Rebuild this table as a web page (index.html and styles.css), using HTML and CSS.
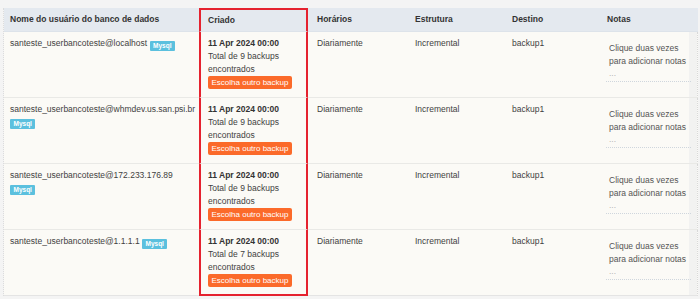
FILE: index.html
```html
<!DOCTYPE html>
<html lang="pt">
<head>
<meta charset="utf-8">
<link rel="stylesheet" href="styles.css">
</head>
<body>
<div class="wrap">
<table class="grid">
<thead>
<tr>
<th class="c-name">Nome do usuário do banco de dados</th>
<th class="c-created">Criado</th>
<th class="c-sched">Horários</th>
<th class="c-struct">Estrutura</th>
<th class="c-dest">Destino</th>
<th class="c-notes">Notas</th>
</tr>
</thead>
<tbody>
<tr>
<td class="c-name"><span class="host">santeste_userbancoteste@localhost</span> <span class="badge">Mysql</span></td>
<td class="c-created"><div class="date">11 Apr 2024 00:00</div><div>Total de 9 backups encontrados</div><span class="btn">Escolha outro backup</span></td>
<td class="c-sched">Diariamente</td>
<td class="c-struct">Incremental</td>
<td class="c-dest">backup1</td>
<td class="c-notes"><div class="note">Clique duas vezes para adicionar notas<div class="dots">...</div></div></td>
</tr>
<tr>
<td class="c-name"><span class="host">santeste_userbancoteste@whmdev.us.san.psi.br</span> <span class="badge">Mysql</span></td>
<td class="c-created"><div class="date">11 Apr 2024 00:00</div><div>Total de 9 backups encontrados</div><span class="btn">Escolha outro backup</span></td>
<td class="c-sched">Diariamente</td>
<td class="c-struct">Incremental</td>
<td class="c-dest">backup1</td>
<td class="c-notes"><div class="note">Clique duas vezes para adicionar notas<div class="dots">...</div></div></td>
</tr>
<tr>
<td class="c-name"><span class="host">santeste_userbancoteste@172.233.176.89</span> <span class="badge">Mysql</span></td>
<td class="c-created"><div class="date">11 Apr 2024 00:00</div><div>Total de 9 backups encontrados</div><span class="btn">Escolha outro backup</span></td>
<td class="c-sched">Diariamente</td>
<td class="c-struct">Incremental</td>
<td class="c-dest">backup1</td>
<td class="c-notes"><div class="note">Clique duas vezes para adicionar notas<div class="dots">...</div></div></td>
</tr>
<tr class="last">
<td class="c-name"><span class="host">santeste_userbancoteste@1.1.1.1</span> <span class="badge">Mysql</span></td>
<td class="c-created"><div class="date">11 Apr 2024 00:00</div><div>Total de 7 backups encontrados</div><span class="btn">Escolha outro backup</span></td>
<td class="c-sched">Diariamente</td>
<td class="c-struct">Incremental</td>
<td class="c-dest">backup1</td>
<td class="c-notes"><div class="note">Clique duas vezes para adicionar notas<div class="dots">...</div></div></td>
</tr>
</tbody>
</table>
</div>
</body>
</html>
```
FILE: styles.css
```css
html, body {
  margin: 0;
  padding: 0;
  background: #f4f4f4;
}
body {
  font-family: "Liberation Sans", Arial, sans-serif;
  font-size: 8.5px;
  line-height: 12.8px;
  color: #3f3f3f;
}
.wrap {
  padding: 8px 0 0 3px;
  border-top: 1px dotted #e2e2e2;
  margin-top: -1px;
}
.grid {
  width: 694px;
  table-layout: fixed;
  border-collapse: separate;
  border-spacing: 0;
  border-left: 1px dotted #dcdcdc;
}
.grid th {
  background: #e4e9ef;
  color: #333;
  font-weight: bold;
  text-align: left;
  height: 24px;
  box-sizing: border-box;
  padding: 0 0 0 7px;
  vertical-align: middle;
  border-bottom: 1px solid #dde3ea;
}
.grid td {
  background: #fbfaf6;
  vertical-align: top;
  height: 66px;
  box-sizing: border-box;
  padding: 5px 0 0 7px;
  border-bottom: 1px solid #e9e9e6;
}
.grid tr.last td {
  border-bottom: 1px solid #e4e4e4;
}
.c-name { width: 195px; }
.grid th.c-name { padding-left: 6px; }
.grid td.c-name { padding-left: 6px; }
.c-created {
  width: 109px;
  border-left: 2px solid #e5222f;
  border-right: 2px solid #e5222f;
}
.grid th.c-created { border-top: 2px solid #e5222f; }
.grid tr.last td.c-created { border-bottom: 2px solid #e5222f; }
.c-sched { width: 100px; }
.grid th.c-sched, .grid td.c-sched { padding-left: 9px; }
.c-struct { width: 97px; }
.c-dest { width: 95px; }
.c-notes { width: 98px; }
.grid th.c-notes { padding-left: 7px; }
.grid td.c-notes {
  padding-left: 6px;
  background: linear-gradient(to right, #fbfaf6 89px, #f2f2f1 89px);
  border-right: 1px dotted #d8d8d8;
}
.host { white-space: nowrap; }
.badge {
  display: inline-block;
  background: #5bc0de;
  color: #fff;
  font-size: 6.5px;
  font-weight: bold;
  line-height: 10px;
  padding: 0 3.5px;
  border-radius: 1px;
  vertical-align: -1.5px;
}
.date {
  font-weight: bold;
  color: #333;
}
.btn {
  display: inline-block;
  background: #fb6a2a;
  color: #fff;
  font-size: 8px;
  line-height: 13px;
  padding: 0 3.5px;
  border-radius: 2px;
  margin-top: 0.5px;
}
.note {
  width: 85px;
  box-sizing: border-box;
  padding: 5px 0 1px 3px;
  border-bottom: 1px dotted #cfd6dd;
  color: #555;
}
.dots {
  color: #b5b5b5;
  line-height: 10px;
  padding-bottom: 2px;
}
```
